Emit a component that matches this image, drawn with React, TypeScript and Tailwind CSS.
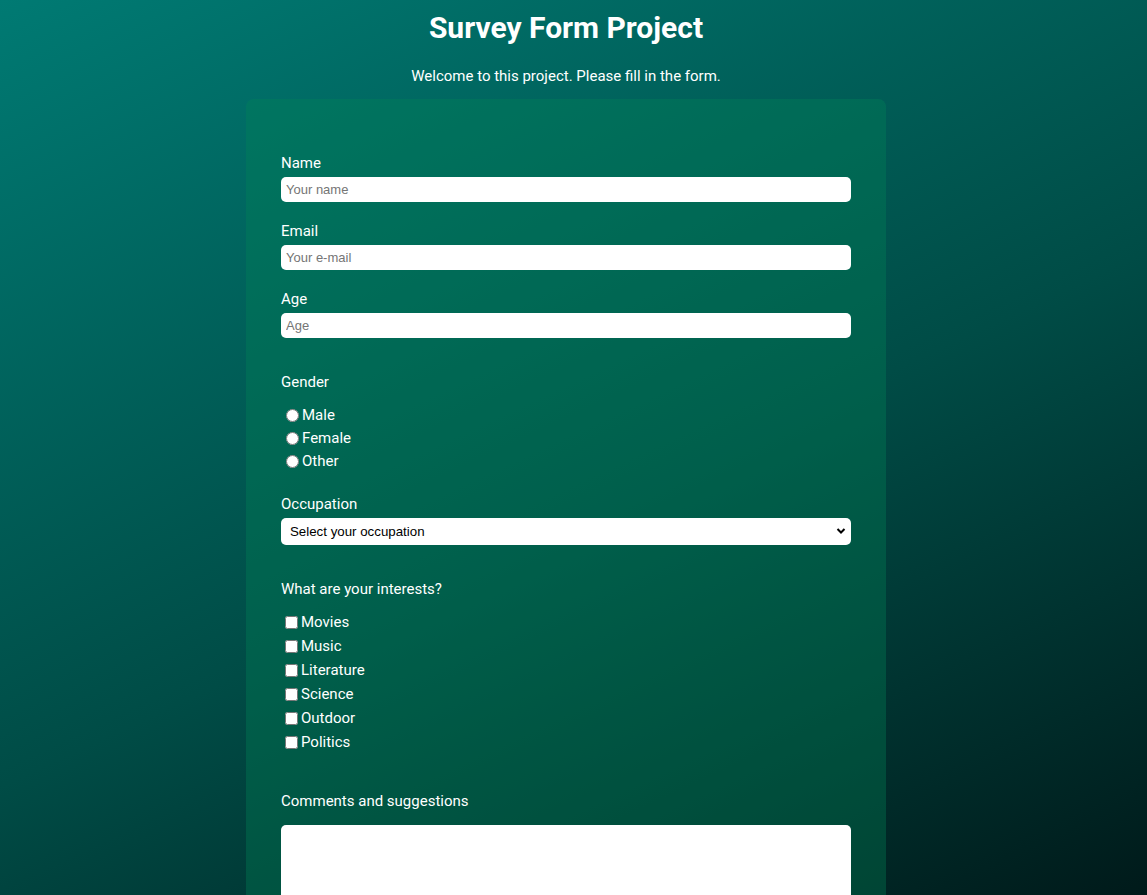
import React from "react";

const genders = ["Male", "Female", "Other"];
const interests = ["Movies", "Music", "Literature", "Science", "Outdoor", "Politics"];

const inputCls =
  "block w-full h-[25px] rounded-[5px] bg-white px-[5px] text-[13px] text-black placeholder:text-[#757575] [font-family:'Liberation_Sans',Arial,sans-serif] outline-none";

export default function App() {
  return (
    <div className="min-h-screen bg-fixed bg-[linear-gradient(155deg,#007a73_0%,#004c46_55%,#001a1a_100%)] text-white [font-family:Roboto,'Noto_Sans',sans-serif] pr-[15px] pb-10">
      <h1 className="text-center text-[30px] font-bold leading-none pt-[13px]">Survey Form Project</h1>
      <p className="text-center text-[15px] mt-[24px] leading-[18px]">
        Welcome to this project. Please fill in the form.
      </p>

      <form className="mx-auto mt-[14px] w-[640px] rounded-[8px] bg-[#008356]/35 px-[35px] pt-[55px] pb-[35px]">
        <label className="block text-[15px] leading-[18px]">Name</label>
        <input className={`${inputCls} mt-[5px]`} placeholder="Your name" />

        <label className="block text-[15px] leading-[18px] mt-[20px]">Email</label>
        <input className={`${inputCls} mt-[5px]`} placeholder="Your e-mail" />

        <label className="block text-[15px] leading-[18px] mt-[20px]">Age</label>
        <input className={`${inputCls} mt-[5px]`} placeholder="Age" />

        <label className="block text-[15px] leading-[18px] mt-[35px]">Gender</label>
        <div className="mt-[13px] flex flex-col">
          {genders.map((g) => (
            <label key={g} className="flex items-center h-[23px] text-[15px]">
              <input type="radio" name="gender" className="ml-[5px] mr-[3px] h-[13px] w-[13px]" />
              {g}
            </label>
          ))}
        </div>

        <label className="block text-[15px] leading-[18px] mt-[22px]">Occupation</label>
        <div className="relative mt-[5px]">
          <select className="block w-full h-[27px] appearance-none rounded-[5px] bg-white pl-[9px] text-[13.3px] text-black [font-family:'Liberation_Sans',Arial,sans-serif] outline-none">
            <option>Select your occupation</option>
            <option>Student</option>
            <option>Employed</option>
            <option>Unemployed</option>
          </select>
          <svg
            className="pointer-events-none absolute right-[5px] top-[9px]"
            width="10"
            height="8"
            viewBox="0 0 10 8"
          >
            <path d="M1.5 2 L5 5.5 L8.5 2" fill="none" stroke="black" strokeWidth="2" />
          </svg>
        </div>

        <label className="block text-[15px] leading-[18px] mt-[35px]">What are your interests?</label>
        <div className="mt-[12px] flex flex-col">
          {interests.map((i) => (
            <label key={i} className="flex items-center h-[24px] text-[15px]">
              <input type="checkbox" className="ml-[4px] mr-[3px] h-[13px] w-[13px]" />
              {i}
            </label>
          ))}
        </div>

        <label className="block text-[15px] leading-[18px] mt-[38px]">Comments and suggestions</label>
        <textarea className="mt-[15px] block w-full h-[150px] rounded-[5px] bg-white p-[5px] text-[13px] text-black outline-none resize-none" />

        <button
          type="submit"
          className="mt-[25px] block w-full h-[36px] rounded-[5px] bg-[#00a37a] text-[15px]"
        >
          Submit
        </button>
      </form>
    </div>
  );
}
